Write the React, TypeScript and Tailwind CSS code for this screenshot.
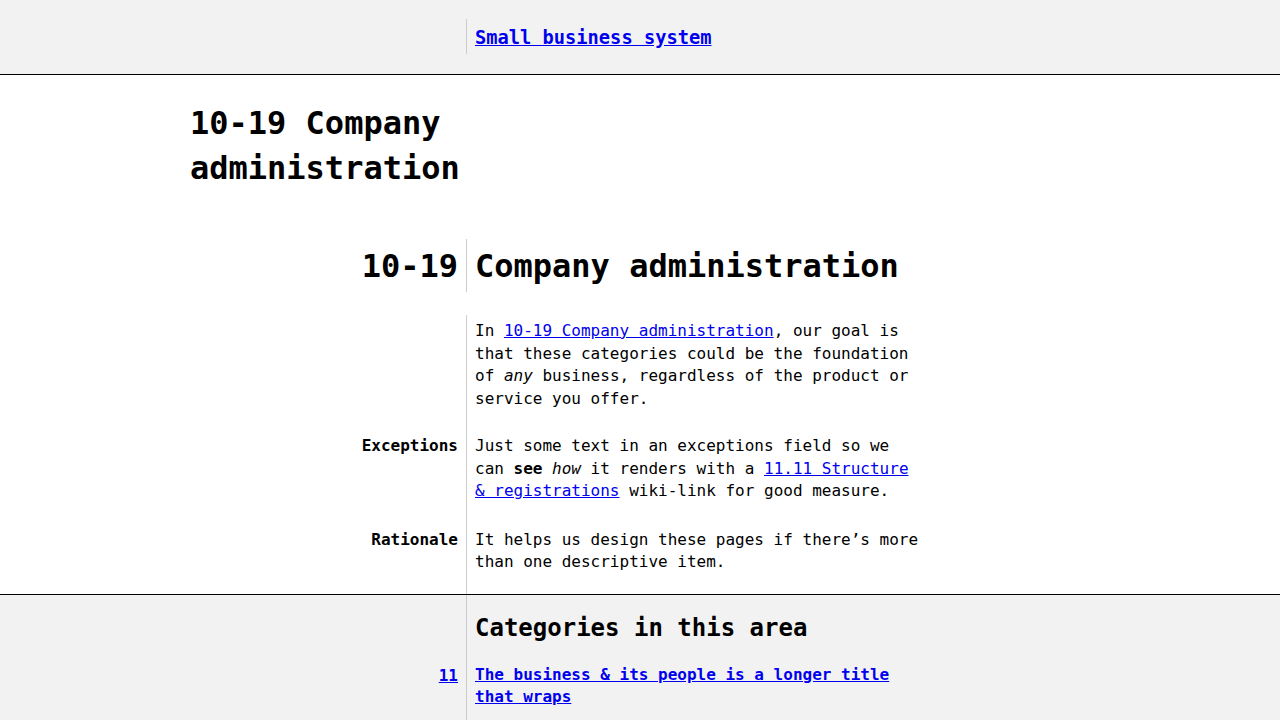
import React from "react";

const font = { fontFamily: '"DejaVu Sans Mono", "Liberation Mono", monospace' };

function Row({ label, children, pad }: { label?: React.ReactNode; children: React.ReactNode; pad: string }) {
  return (
    <div className="grid grid-cols-[276px_1fr]">
      <div className={"pr-2 text-right font-bold text-[16px] leading-[22.5px] " + pad}>{label}</div>
      <div className={"border-l border-[#cccccc] pl-2 " + pad}>{children}</div>
    </div>
  );
}

export default function App() {
  return (
    <div style={font} className="min-h-[720px] bg-[#f2f2f2] text-black">
      {/* Header */}
      <header className="bg-[#f2f2f2] border-b border-black h-[75px] pt-[19px]">
        <div className="mx-auto w-[900px] grid grid-cols-[276px_1fr]">
          <div />
          <div className="border-l border-[#cccccc] pl-2 h-[35px] flex items-center pt-[2px]">
            <a href="#" className="text-[18.72px] font-bold text-[#0000ee] underline leading-[26px]">
              Small business system
            </a>
          </div>
        </div>
      </header>

      {/* Main */}
      <main className="bg-white border-b border-black">
        <div className="mx-auto w-[900px]">
          <h1 className="w-[268px] text-[32px] font-bold leading-[45px] pt-[26px]">
            10-19 Company administration
          </h1>

          <div className="mt-[48px] grid grid-cols-[276px_1fr] h-[53px]">
            <div className="pr-2 pt-[2px] text-right text-[32px] font-bold flex items-center justify-end leading-[45px]">10-19</div>
            <div className="border-l border-[#cccccc] pl-2 pt-[2px] flex items-center text-[32px] font-bold leading-[45px]">
              Company administration
            </div>
          </div>

          <div className="mt-[23px]">
            <Row pad="pt-[5px] pb-[24px]">
              <p className="w-[448px] text-[16px] leading-[22.5px]">
                In{" "}
                <a href="#" className="text-[#0000ee] underline">
                  10-19 Company administration
                </a>
                , our goal is that these categories could be the foundation of <em>any</em> business, regardless of the
                product or service you offer.
              </p>
            </Row>
            <Row label="Exceptions" pad="pt-[1px] pb-[26px]">
              <p className="w-[448px] text-[16px] leading-[22.5px]">
                Just some text in an exceptions field so we can <strong>see</strong> <em>how</em> it renders with a{" "}
                <a href="#" className="text-[#0000ee] underline">
                  11.11 Structure &amp; registrations
                </a>{" "}
                wiki-link for good measure.
              </p>
            </Row>
            <Row label="Rationale" pad="pb-[20px]">
              <p className="w-[448px] text-[16px] leading-[22.5px]">
                It helps us design these pages if there’s more than one descriptive item.
              </p>
            </Row>
          </div>
        </div>
      </main>

      {/* Footer */}
      <section className="bg-[#f2f2f2]">
        <div className="mx-auto w-[900px] grid grid-cols-[276px_1fr] min-h-[125px]">
          <div className="pr-2 text-right pt-[69px]">
            <a href="#" className="text-[16px] font-bold text-[#0000ee] underline leading-[22.5px]">
              11
            </a>
          </div>
          <div className="border-l border-[#cccccc] pl-2 pt-[16px]">
            <h2 className="text-[24px] font-bold leading-[34px]">Categories in this area</h2>
            <p className="mt-[19px] w-[448px] text-[16px] leading-[22.5px]">
              <a href="#" className="font-bold text-[#0000ee] underline">
                The business &amp; its people is a longer title that wraps
              </a>
            </p>
          </div>
        </div>
      </section>
    </div>
  );
}
